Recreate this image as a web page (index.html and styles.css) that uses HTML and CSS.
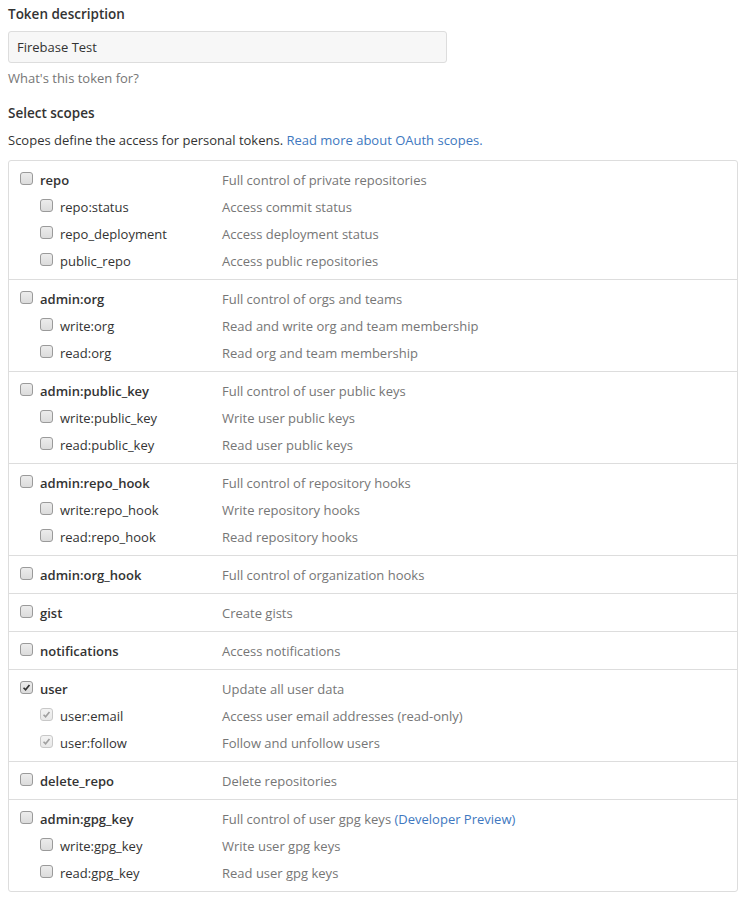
FILE: index.html
```html
<!DOCTYPE html>
<html>
<head>
<meta charset="utf-8">
<link rel="stylesheet" href="styles.css">
</head>
<body>
<div class="page">
  <div class="field">
    <label class="field-label">Token description</label>
    <div class="input">Firebase Test</div>
    <div class="note">What's this token for?</div>
  </div>
  <div class="field">
    <div class="field-label scopes-title">Select scopes</div>
    <p class="intro">Scopes define the access for personal tokens. <a class="link">Read more about OAuth scopes.</a></p>
  </div>
  <div class="scopes">
    <div class="group">
      <div class="row"><span class="cb"></span><span class="name main">repo</span><span class="desc">Full control of private repositories</span></div>
      <div class="row sub"><span class="cb"></span><span class="name">repo:status</span><span class="desc">Access commit status</span></div>
      <div class="row sub"><span class="cb"></span><span class="name">repo_deployment</span><span class="desc">Access deployment status</span></div>
      <div class="row sub"><span class="cb"></span><span class="name">public_repo</span><span class="desc">Access public repositories</span></div>
    </div>
    <div class="group">
      <div class="row"><span class="cb"></span><span class="name main">admin:org</span><span class="desc">Full control of orgs and teams</span></div>
      <div class="row sub"><span class="cb"></span><span class="name">write:org</span><span class="desc">Read and write org and team membership</span></div>
      <div class="row sub"><span class="cb"></span><span class="name">read:org</span><span class="desc">Read org and team membership</span></div>
    </div>
    <div class="group">
      <div class="row"><span class="cb"></span><span class="name main">admin:public_key</span><span class="desc">Full control of user public keys</span></div>
      <div class="row sub"><span class="cb"></span><span class="name">write:public_key</span><span class="desc">Write user public keys</span></div>
      <div class="row sub"><span class="cb"></span><span class="name">read:public_key</span><span class="desc">Read user public keys</span></div>
    </div>
    <div class="group">
      <div class="row"><span class="cb"></span><span class="name main">admin:repo_hook</span><span class="desc">Full control of repository hooks</span></div>
      <div class="row sub"><span class="cb"></span><span class="name">write:repo_hook</span><span class="desc">Write repository hooks</span></div>
      <div class="row sub"><span class="cb"></span><span class="name">read:repo_hook</span><span class="desc">Read repository hooks</span></div>
    </div>
    <div class="group">
      <div class="row"><span class="cb"></span><span class="name main">admin:org_hook</span><span class="desc">Full control of organization hooks</span></div>
    </div>
    <div class="group">
      <div class="row"><span class="cb"></span><span class="name main">gist</span><span class="desc">Create gists</span></div>
    </div>
    <div class="group">
      <div class="row"><span class="cb"></span><span class="name main">notifications</span><span class="desc">Access notifications</span></div>
    </div>
    <div class="group">
      <div class="row"><span class="cb checked"><svg viewBox="0 0 13 13"><path d="M3 6.8 L5.4 9.2 L10 3.6" /></svg></span><span class="name main">user</span><span class="desc">Update all user data</span></div>
      <div class="row sub"><span class="cb checked disabled"><svg viewBox="0 0 13 13"><path d="M3 6.8 L5.4 9.2 L10 3.6" /></svg></span><span class="name">user:email</span><span class="desc">Access user email addresses (read-only)</span></div>
      <div class="row sub"><span class="cb checked disabled"><svg viewBox="0 0 13 13"><path d="M3 6.8 L5.4 9.2 L10 3.6" /></svg></span><span class="name">user:follow</span><span class="desc">Follow and unfollow users</span></div>
    </div>
    <div class="group">
      <div class="row"><span class="cb"></span><span class="name main">delete_repo</span><span class="desc">Delete repositories</span></div>
    </div>
    <div class="group">
      <div class="row"><span class="cb"></span><span class="name main">admin:gpg_key</span><span class="desc">Full control of user gpg keys <a class="link">(Developer Preview)</a></span></div>
      <div class="row sub"><span class="cb"></span><span class="name">write:gpg_key</span><span class="desc">Write user gpg keys</span></div>
      <div class="row sub"><span class="cb"></span><span class="name">read:gpg_key</span><span class="desc">Read user gpg keys</span></div>
    </div>
  </div>
</div>
</body>
</html>
```
FILE: styles.css
```css
html, body {
  margin: 0;
  padding: 0;
  background: #fff;
}
body {
  font-family: "Open Sans", "Noto Sans", "Liberation Sans", sans-serif;
  font-size: 13px;
  color: #333;
}
.page {
  padding: 4px 13px 8px 8px;
}
.field-label {
  display: block;
  font-weight: 600;
  font-size: 13.5px;
  line-height: 20px;
  color: #333;
}
.input {
  margin-top: 7px;
  width: 439px;
  height: 32px;
  box-sizing: border-box;
  border: 1px solid #ddd;
  border-radius: 3px;
  background: #f7f7f7;
  padding: 0 8px;
  line-height: 30px;
  color: #333;
}
.note {
  margin-top: 5px;
  color: #767676;
  line-height: 20px;
}
.scopes-title {
  margin-top: 15px;
}
.intro {
  margin: 7px 0 0;
  line-height: 20px;
  color: #333;
}
.link {
  color: #4078c0;
  text-decoration: none;
}
.scopes {
  margin-top: 10px;
  border: 1px solid #ddd;
  border-radius: 3px;
}
.group {
  padding: 5px 0 5px;
  border-top: 1px solid #ddd;
}
.group:first-child {
  border-top: 0;
}
.row {
  display: flex;
  align-items: center;
  height: 27px;
  padding-left: 11px;
}
.row.sub {
  padding-left: 31px;
}
.cb {
  flex: none;
  width: 11px;
  height: 11px;
  border: 1px solid #9a9a9a;
  border-radius: 3px;
  background: linear-gradient(#ececec, #dcdcdc);
  margin-top: -3px;
  display: flex;
  align-items: center;
  justify-content: center;
}
.cb svg {
  width: 11px;
  height: 11px;
}
.cb svg path {
  fill: none;
  stroke: #333;
  stroke-width: 2;
}
.cb.disabled {
  border-color: #c8c8c8;
  background: linear-gradient(#f3f3f3, #e8e8e8);
}
.cb.disabled svg path {
  stroke: #a0a0a0;
}
.name {
  margin-left: 7px;
  width: 182px;
  flex: none;
  color: #333;
}
.row.sub .name {
  width: 162px;
}
.name.main {
  font-weight: 600;
}
.desc {
  color: #767676;
}
```
